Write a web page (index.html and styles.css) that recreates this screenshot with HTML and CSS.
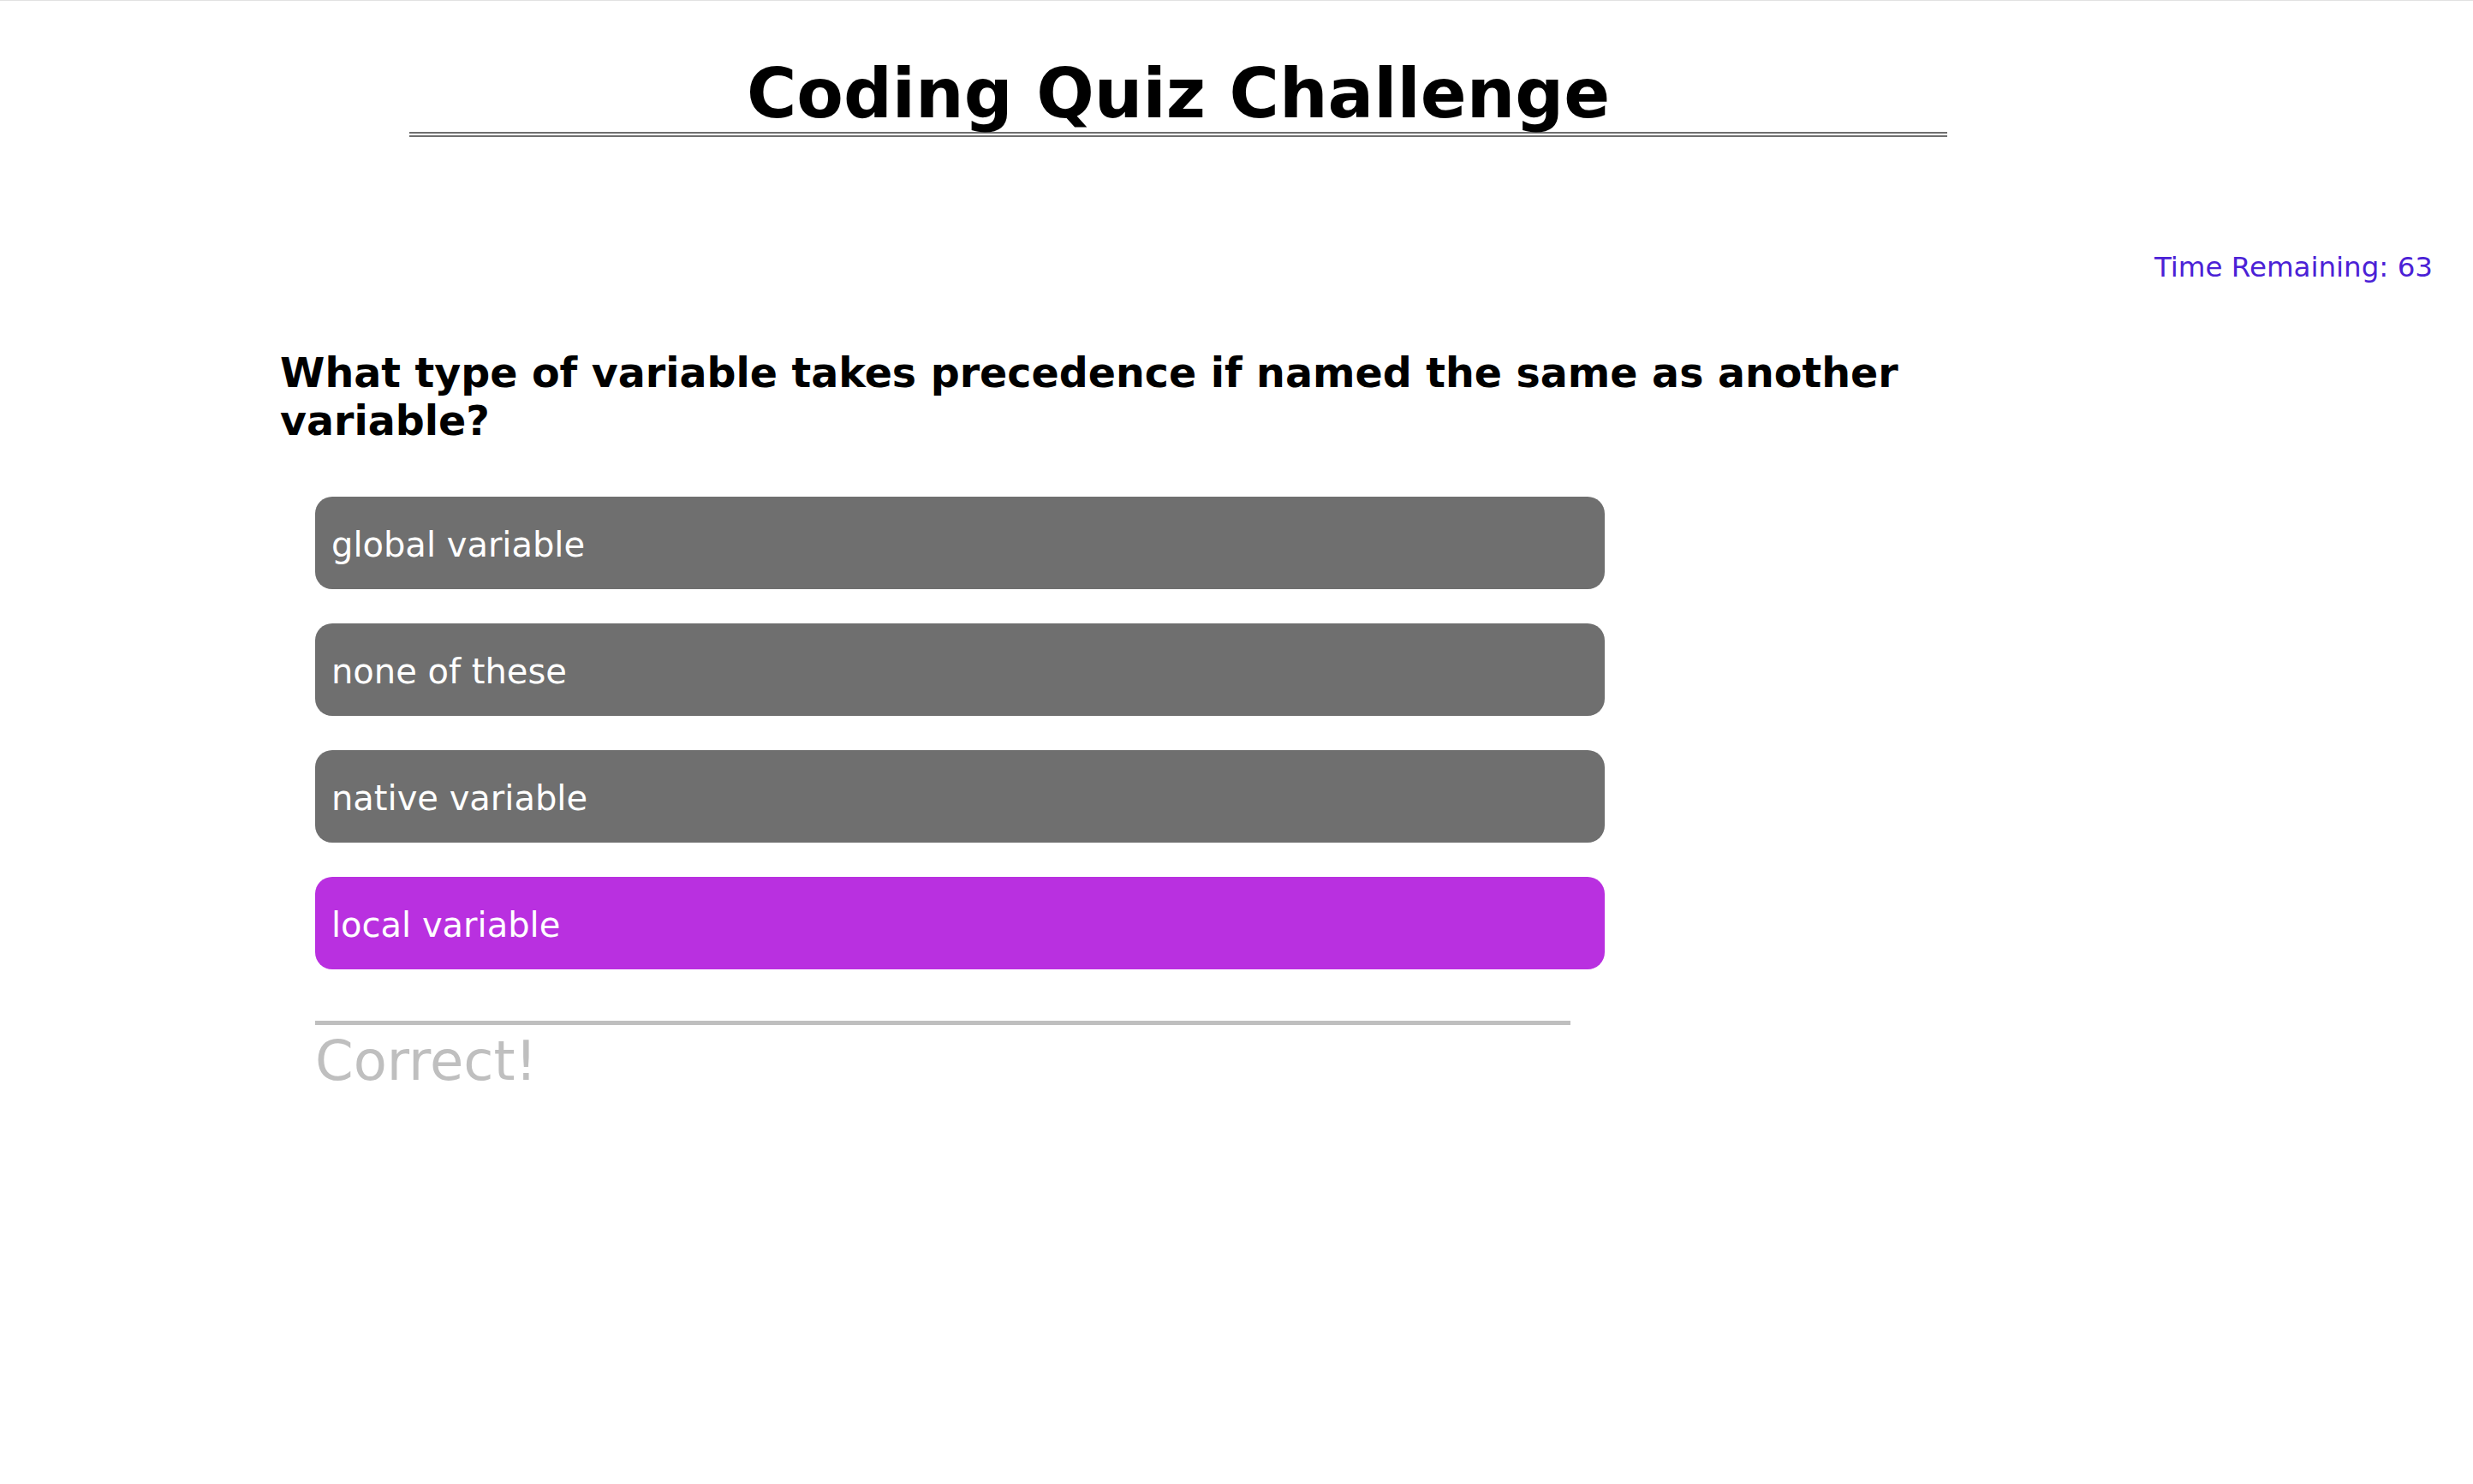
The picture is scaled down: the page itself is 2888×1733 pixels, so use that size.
FILE: index.html
```html
<!DOCTYPE html>
<html lang="en">
<head>
<meta charset="utf-8">
<title>Coding Quiz Challenge</title>
<link rel="stylesheet" href="styles.css">
</head>
<body>
<header class="title-wrap">
  <h1 class="title">Coding Quiz Challenge</h1>
</header>
<div class="timer">Time Remaining: 63</div>
<main class="quiz">
  <h2 class="question">What type of variable takes precedence if named the same as another variable?</h2>
  <div class="answers">
    <button class="answer">global variable</button>
    <button class="answer">none of these</button>
    <button class="answer">native variable</button>
    <button class="answer answer-selected">local variable</button>
  </div>
  <div class="feedback">Correct!</div>
</main>
</body>
</html>
```
FILE: styles.css
```css
html, body {
  margin: 0;
  padding: 0;
  background: #ffffff;
}

body {
  border-top: 1px solid #e2e2e2;
  font-family: "DejaVu Sans", Verdana, sans-serif;
  color: #000000;
}

.title-wrap {
  padding: 0 614px 0 478px;
}

.title {
  margin: 65px 0 0 0;
  font-size: 79.5px;
  line-height: 88px;
  font-weight: bold;
  text-align: center;
  border-bottom: 6px double #6f6f6f;
}

.timer {
  margin-top: 133px;
  padding-right: 47px;
  text-align: right;
  font-size: 32.5px;
  color: #4b21d6;
}

.quiz {
  padding-left: 327px;
}

.question {
  width: 1960px;
  margin: 77px 0 0 0;
  font-size: 47.5px;
  line-height: 56px;
  font-weight: bold;
}

.answers {
  margin: 60px 0 0 41px;
  width: 1506px;
  display: flex;
  flex-direction: column;
  gap: 40px;
}

.answer {
  display: block;
  height: 108px;
  width: 100%;
  box-sizing: border-box;
  padding: 3px 19px 0 19px;
  border: none;
  border-radius: 20px;
  background: #6f6f6f;
  color: #ffffff;
  font-family: "DejaVu Sans", Verdana, sans-serif;
  font-size: 40px;
  line-height: 46px;
  text-align: left;
}

.answer-selected {
  background: #b930e0;
}

.feedback {
  margin: 60px 0 0 41px;
  width: 1466px;
  border-top: 5px solid #bfbfbf;
  padding-top: 5px;
  font-size: 64px;
  line-height: 74px;
  color: #bfbfbf;
}
```
